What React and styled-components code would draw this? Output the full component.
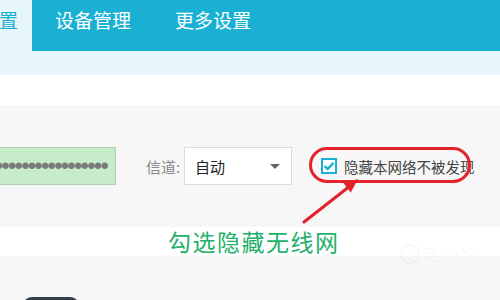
import { styled, createGlobalStyle } from "styled-components";

const GlobalStyle = createGlobalStyle`
  html, body {
    margin: 0;
    padding: 0;
  }
  body {
    width: 500px;
    height: 300px;
    overflow: hidden;
    background: #f7f7f7;
    font-family: "Noto Sans CJK SC", "Noto Sans", sans-serif;
  }
`;

function App() {
  return (
    <Page>
      <GlobalStyle />
      <Nav>
        <NavLeft>设置</NavLeft>
        <Tabs>
          <Tab>设备管理</Tab>
          <Tab>更多设置</Tab>
        </Tabs>
      </Nav>
      <SubBand />
      <WhiteBand />
      <FormArea>
        <Row>
          <Password>{"•".repeat(20)}</Password>
          <Label>信道:</Label>
          <Select>
            <span>自动</span>
            <Caret />
          </Select>
          <CheckField>
            <Box>
              <svg width="12" height="12" viewBox="0 0 12 12">
                <path d="M1.5 6.2 L4.6 9 L10.5 2.8" fill="none" stroke="#1ab0d4" strokeWidth="2.4" />
              </svg>
            </Box>
            <CheckText>隐藏本网络不被发现</CheckText>
          </CheckField>
        </Row>
      </FormArea>
      <Caption>
        <CaptionText>勾选隐藏无线网</CaptionText>
        <Watermark>
          <WmLogo>S</WmLogo>
          <span>更多精彩</span>
        </Watermark>
      </Caption>
      <Bottom>
        <Pill />
      </Bottom>
      <Arrow width="500" height="300" viewBox="0 0 500 300">
        <line x1="304" y1="222" x2="350" y2="186" stroke="#e3222c" strokeWidth="3" strokeLinecap="round" />
        <polygon points="358,179 350.8,192.4 343.4,183" fill="#e3222c" />
      </Arrow>
    </Page>
  );
}

const Page = styled.div`
  position: relative;
  width: 500px;
  height: 300px;
  overflow: hidden;
  background: #f7f7f7;
`;
const Nav = styled.div`
  display: flex;
  height: 51px;
`;
const NavLeft = styled.div`
  width: 32px;
  background: #e6f6fb;
  color: #1ab0d4;
  font-size: 19px;
  line-height: 24px;
  padding-top: 8px;
  display: flex;
  justify-content: flex-end;
  padding-right: 14px;
  box-sizing: border-box;
  overflow: hidden;
  white-space: nowrap;
`;
const Tabs = styled.div`
  flex: 1;
  background: #1ab0d4;
  display: flex;
  gap: 44px;
  padding: 8px 0 0 23px;
`;
const Tab = styled.div`
  color: #ffffff;
  font-size: 19px;
  line-height: 24px;
`;
const SubBand = styled.div`
  height: 24px;
  background: #e6f6fb;
`;
const WhiteBand = styled.div`
  height: 30px;
  background: #ffffff;
`;
const FormArea = styled.div`
  height: 122px;
  padding-top: 42px;
  box-sizing: border-box;
`;
const Row = styled.div`
  display: flex;
  align-items: center;
  height: 38px;
`;
const Password = styled.div`
  width: 116px;
  height: 38px;
  box-sizing: border-box;
  background: #c6ecc9;
  border: 1px solid #b2cdb3;
  border-left: none;
  color: #7a7a7a;
  font-family: "Liberation Sans", sans-serif;
  font-size: 24px;
  letter-spacing: -1.8px;
  line-height: 36px;
  overflow: hidden;
  white-space: nowrap;
  direction: rtl;
  padding-right: 8px;
`;
const Label = styled.div`
  margin-left: 30px;
  width: 38px;
  color: #888;
  font-size: 15px;
`;
const Select = styled.div`
  width: 108px;
  height: 38px;
  box-sizing: border-box;
  background: #ffffff;
  border: 1px solid #dcdcdc;
  display: flex;
  align-items: center;
  justify-content: space-between;
  padding: 0 11px 0 10px;
  font-size: 15px;
  color: #222;
`;
const Caret = styled.div`
  width: 0;
  height: 0;
  border-left: 5px solid transparent;
  border-right: 5px solid transparent;
  border-top: 5px solid #666;
`;
const CheckField = styled.div`
  position: relative;
  margin-left: 29px;
  display: flex;
  align-items: center;
  gap: 7px;
  height: 38px;

  &::before {
    content: "";
    position: absolute;
    left: -12px;
    top: 0;
    width: 162px;
    height: 36px;
    box-sizing: border-box;
    border: 3px solid #e3222c;
    border-radius: 18px;
  }
`;
const Box = styled.div`
  width: 16px;
  height: 16px;
  box-sizing: border-box;
  border: 2px solid #1ab0d4;
  background: #fff;
  display: flex;
  align-items: center;
  justify-content: center;
`;
const CheckText = styled.div`
  font-size: 14.5px;
  color: #444;
  white-space: nowrap;
`;
const Caption = styled.div`
  position: relative;
  height: 29px;
  background: #ffffff;
  padding-left: 168px;
`;
const CaptionText = styled.div`
  color: #22b06a;
  font-size: 23px;
  line-height: 29px;
  letter-spacing: 1.5px;
`;
const Watermark = styled.div`
  position: absolute;
  left: 400px;
  top: 16px;
  display: flex;
  align-items: center;
  gap: 3px;
  color: rgba(0, 0, 0, 0.03);
  font-size: 15px;
`;
const WmLogo = styled.div`
  width: 16px;
  height: 16px;
  border-radius: 50%;
  border: 2px solid rgba(0, 0, 0, 0.03);
  font-size: 12px;
  line-height: 16px;
  text-align: center;
`;
const Bottom = styled.div`
  padding: 41px 0 0 22px;
`;
const Pill = styled.div`
  width: 58px;
  height: 20px;
  border-radius: 10px;
  background: #353d48;
`;
const Arrow = styled.svg`
  position: absolute;
  left: 0;
  top: 0;
  pointer-events: none;
`;

export default App;
